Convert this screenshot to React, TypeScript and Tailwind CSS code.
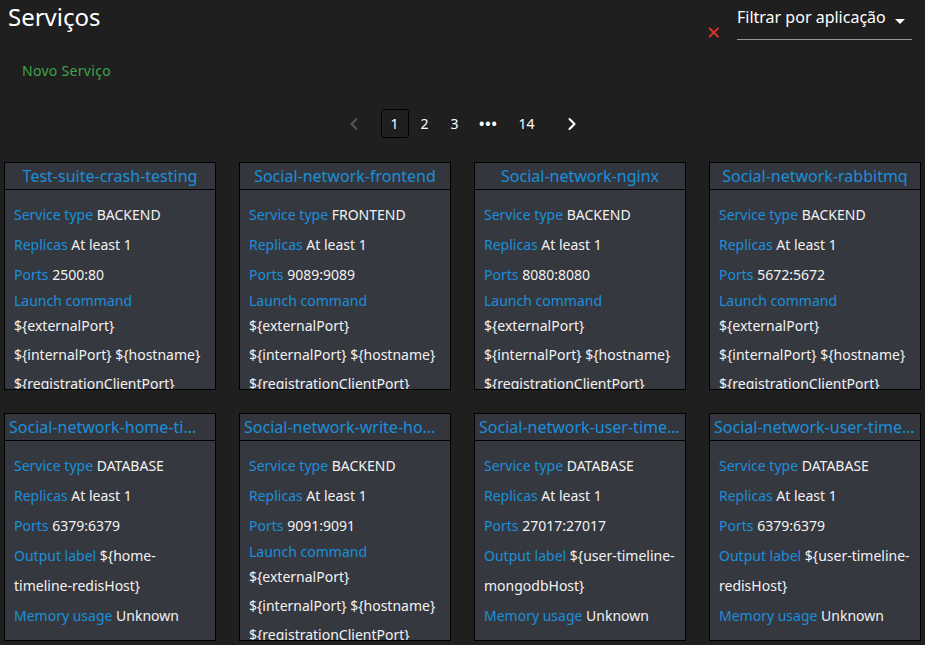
import { ChevronLeft, ChevronRight } from "lucide-react";

interface Service {
  name: string;
  type: string;
  ports: string;
  launch?: string;
  output?: string;
}

const LAUNCH = "${externalPort} ${internalPort} ${hostname} ${registrationClientPort} ${registrationServerPort}";

const SERVICES: Service[] = [
  { name: "Test-suite-crash-testing", type: "BACKEND", ports: "2500:80", launch: LAUNCH },
  { name: "Social-network-frontend", type: "FRONTEND", ports: "9089:9089", launch: LAUNCH },
  { name: "Social-network-nginx", type: "BACKEND", ports: "8080:8080", launch: LAUNCH },
  { name: "Social-network-rabbitmq", type: "BACKEND", ports: "5672:5672", launch: LAUNCH },
  { name: "Social-network-home-timeline-redis", type: "DATABASE", ports: "6379:6379", output: "${home-timeline-redisHost}" },
  { name: "Social-network-write-home-timeline-service", type: "BACKEND", ports: "9091:9091", launch: LAUNCH },
  { name: "Social-network-user-timeline-mongodb", type: "DATABASE", ports: "27017:27017", output: "${user-timeline-mongodbHost}" },
  { name: "Social-network-user-timeline-redis", type: "DATABASE", ports: "6379:6379", output: "${user-timeline-redisHost}" },
];

function ServiceCard({ s }: { s: Service }) {
  return (
    <div className="h-[228px] bg-[#363840] border border-black overflow-hidden flex flex-col">
      <div className="h-[27px] shrink-0 px-[4px] border-b border-black bg-[#34363e] text-[16px] leading-[26px] text-[#1b8fd8] text-center truncate">
        {s.name}
      </div>
      <div className="px-[9px] pt-[10px] text-[14px] text-[#f2f2f2]">
        <p className="leading-[30px]">
          <span className="text-[#1b8fd8]">Service type</span> {s.type}
        </p>
        <p className="leading-[30px]">
          <span className="text-[#1b8fd8]">Replicas</span> At least 1
        </p>
        <p className="leading-[30px]">
          <span className="text-[#1b8fd8]">Ports</span> {s.ports}
        </p>
        {s.launch && (
          <>
            <p className="leading-[21px] text-[#1b8fd8]">Launch command</p>
            <p className="leading-[29px] break-words">{s.launch}</p>
          </>
        )}
        {s.output && (
          <>
            <p className="leading-[30px] break-words">
              <span className="text-[#1b8fd8]">Output label</span> {s.output}
            </p>
            <p className="leading-[30px]">
              <span className="text-[#1b8fd8]">Memory usage</span> Unknown
            </p>
          </>
        )}
      </div>
    </div>
  );
}

export default function App() {
  return (
    <div
      className="min-h-screen bg-[#1f1f1f] text-white"
      style={{ fontFamily: '"Noto Sans", "Open Sans", sans-serif' }}
    >
      <div className="flex justify-between">
        <div>
          <h1 className="pl-[8px] pt-[2px] text-[24px] leading-[30px] text-white">Serviços</h1>
          <button className="ml-[22px] mt-[29px] text-[14px] leading-[20px] text-[#3ea34b] tracking-[0.3px]">
            Novo Serviço
          </button>
        </div>
        <div className="flex items-start pr-[13px]">
          <span className="mt-[22px] mr-[16px] text-[#d9362b] text-[18px] leading-[20px]">✕</span>
          <div className="w-[175px] h-[40px] border-b border-[#9a9a9a] flex items-start justify-between">
            <span className="mt-[5px] text-[16px] leading-[24px] text-white">Filtrar por aplicação</span>
            <svg width="10" height="5" viewBox="0 0 10 5" className="mt-[19px] mr-[7px]">
              <path d="M0 0 L10 0 L5 5 Z" fill="#ffffff" />
            </svg>
          </div>
        </div>
      </div>

      <div className="mt-[27px] flex justify-center items-center gap-[2px] text-[14px]">
        <span className="w-[28px] h-[29px] mr-[11px] flex items-center justify-center text-[#555]">
          <ChevronLeft size={20} strokeWidth={2.5} />
        </span>
        <span className="w-[28px] h-[29px] flex items-center justify-center border border-black rounded-[3px]">1</span>
        <span className="w-[28px] h-[29px] flex items-center justify-center">2</span>
        <span className="w-[28px] h-[29px] flex items-center justify-center">3</span>
        <span className="w-[36px] h-[29px] flex items-center justify-center font-bold tracking-[1px] text-[14px]">•••</span>
        <span className="w-[36px] h-[29px] flex items-center justify-center">14</span>
        <span className="w-[28px] h-[29px] ml-[11px] flex items-center justify-center text-white">
          <ChevronRight size={20} strokeWidth={2.5} />
        </span>
      </div>

      <div className="mt-[24px] px-[4px] grid grid-cols-4 gap-x-[23px] gap-y-[23px]">
        {SERVICES.map((s) => (
          <ServiceCard key={s.name} s={s} />
        ))}
      </div>
    </div>
  );
}
